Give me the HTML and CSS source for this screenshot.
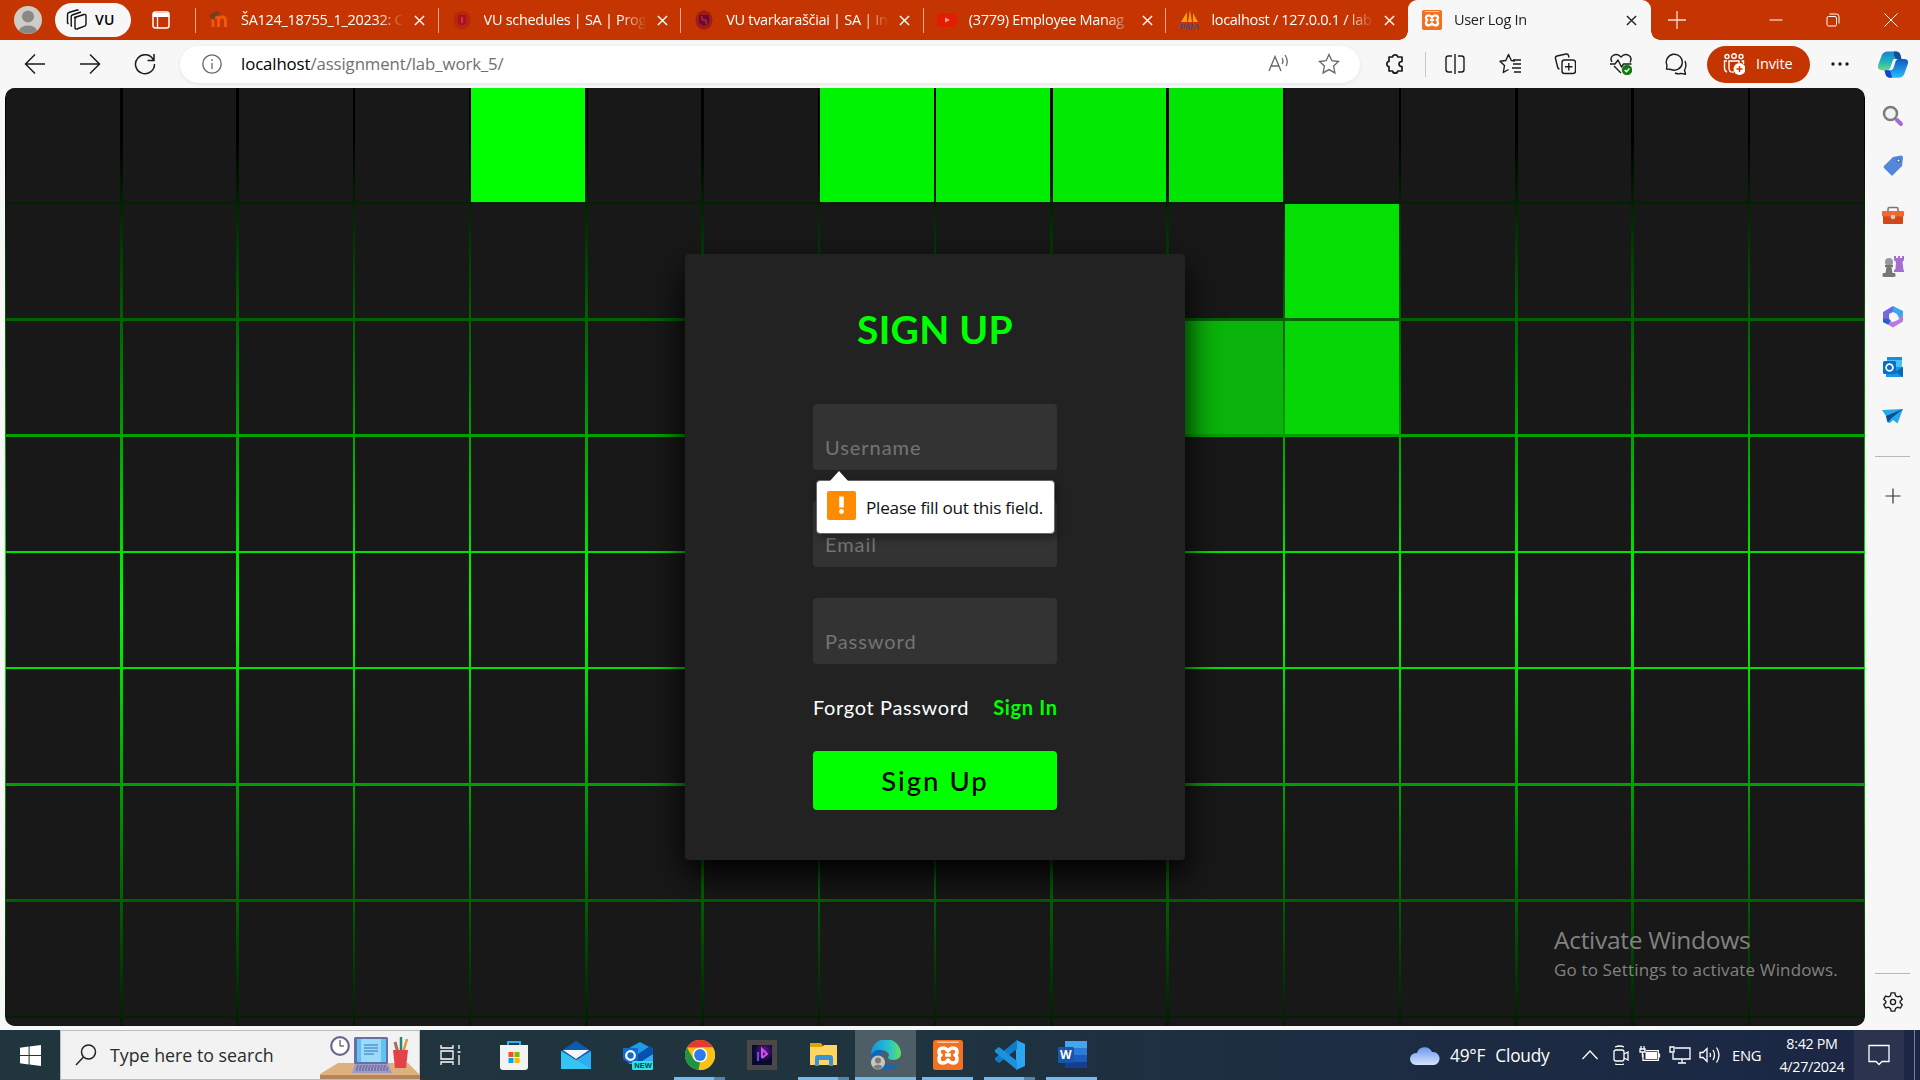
FILE: index.html
```html
<!DOCTYPE html>
<html lang="en">
<head>
<meta charset="utf-8">
<title>User Log In</title>
<link rel="stylesheet" href="styles.css">
</head>
<body>
<div class="screen">
  <header class="tabstrip">
    <svg class="avatar" viewBox="0 0 28 28"><circle cx="14" cy="14" r="14" fill="#cfccc8"/><circle cx="14" cy="10.5" r="6" fill="#8a8886"/><path d="M5 24.500a9.500 7.500 0 0 1 18 0a14 14 0 0 1-18 0z" fill="#8a8886"/></svg>
    <div class="workspace">
      <svg width="22" height="22" viewBox="0 0 22 22" fill="none" stroke="#111" stroke-width="1.400" stroke-linejoin="round"><path d="M8.500 8.500 18 5.500q2-.5 2 1.500v8q0 1.500-1.500 2.200L11 20q-2 .6-2-1.500V10q0-1 1-1.500z"/><path d="M6 17.500l-.8-.5V7.500q0-1 1-1.500L15 3"/><path d="M2.500 15l-1-1V5.500Q1.500 4 3 3.500L11 1q1-.3 1.500.5"/></svg>
      <span class="workspace-name">VU</span>
    </div>
    <svg class="tab-actions" width="18" height="18" viewBox="0 0 18 18" fill="none" stroke="#fff"><rect x="1" y="1" width="16" height="16" rx="2.500" stroke-width="1.500"/><path d="M1 4h16" stroke-width="4"/><path d="M5.500 5v12" stroke-width="1.300"/></svg>
    <nav class="tabs">
      <div class="tab"><svg class="fav" viewBox="0 0 20 20"><path d="M4 17V10q0-3 2.800-3T9.500 10v7M9.500 17v-7q0-3 3.500-3t3.500 3v7" fill="none" stroke="#ef5709" stroke-width="3"/><path d="M0 5 8 1l4 3-6 3v3L1 8z" fill="#7a3d20"/></svg><span class="tab-title">ŠA124_18755_1_20232: C</span><svg class="x" viewBox="0 0 12 12"><path d="M1 1l10 10M11 1 1 11"/></svg></div>
      <div class="tab"><svg class="fav" viewBox="0 0 20 20"><ellipse cx="10" cy="10" rx="8.500" ry="9.500" fill="#b62710"/><path d="M6 5h8v8l-4 3-4-3z" fill="#a80e24"/><path d="M9 7h2v6H9z" fill="#c93a30"/></svg><span class="tab-title">VU schedules | SA | Prog</span><svg class="x" viewBox="0 0 12 12"><path d="M1 1l10 10M11 1 1 11"/></svg></div>
      <div class="tab"><svg class="fav" viewBox="0 0 20 20"><ellipse cx="10" cy="10" rx="8.500" ry="9.500" fill="#9d1b1a"/><path d="M5 5h10v8l-5 3-5-3z" fill="#6e0636"/><path d="M8 6v4h4v4" fill="none" stroke="#b84a1c"/></svg><span class="tab-title">VU tvarkaraščiai | SA | Inc</span><svg class="x" viewBox="0 0 12 12"><path d="M1 1l10 10M11 1 1 11"/></svg></div>
      <div class="tab"><svg class="fav" viewBox="0 0 20 20"><rect y="3" width="20" height="14" rx="3.500" fill="#e31c04"/><path d="M8 7.500v5l5-2.500z" fill="#e9a08e"/></svg><span class="tab-title">(3779) Employee Manag</span><svg class="x" viewBox="0 0 12 12"><path d="M1 1l10 10M11 1 1 11"/></svg></div>
      <div class="tab"><svg class="fav" viewBox="0 0 20 20"><path d="M2 12 8 2v10zM9 12l2-12 2 12zM14 12V3l5 9z" fill="#f89c0e"/><text x="0" y="20" class="pma">PMA</text></svg><span class="tab-title">localhost / 127.0.0.1 / lab</span><svg class="x" viewBox="0 0 12 12"><path d="M1 1l10 10M11 1 1 11"/></svg></div>
      <div class="tab active"><svg class="fav" viewBox="0 0 30 30"><use href="#xampp"/></svg><span class="tab-title">User Log In</span><svg class="x" viewBox="0 0 12 12"><path d="M1 1l10 10M11 1 1 11"/></svg></div>
    </nav>
    <svg class="new-tab" viewBox="0 0 18 18"><path d="M9 0v18M0 9h18"/></svg>
    <div class="window-buttons">
      <svg viewBox="0 0 14 14"><path d="M0.500 7h13"/></svg>
      <svg viewBox="0 0 14 14"><rect x="1" y="3.500" width="9.500" height="9.500" rx="1.500"/><path d="M3.500 1h7q2.500 0 2.500 2.500v7"/></svg>
      <svg viewBox="0 0 14 14"><path d="M.5.5l13 13M13.500.5l-13 13"/></svg>
    </div>
  </header>

  <div class="toolbar">
    <div class="nav-buttons">
      <svg viewBox="0 0 22 22"><path d="M21 11H1.500M11 1.500 1.500 11l9.500 9.500"/></svg>
      <svg viewBox="0 0 22 22"><path d="M1 11h19.500M11 1.500l9.500 9.500-9.500 9.500"/></svg>
      <svg viewBox="0 0 22 22"><path d="M19.500 7A9.500 9.500 0 1 0 20.500 11M20 1v6.500h-6.500"/></svg>
    </div>
    <div class="address">
      <svg class="info" viewBox="0 0 20 20"><circle cx="10" cy="10" r="9.200"/><path d="M10 9v6M10 5v2"/></svg>
      <span class="url"><b>localhost</b>/assignment/lab_work_5/</span>
      <svg class="read" viewBox="0 0 22 22"><path d="M1 18 7 3.500 13 18M3 13h8M14 5q2 3 0 6M17 2q4 6 1 11"/></svg>
      <svg class="star" viewBox="0 0 22 22"><path d="M11 1.500l2.900 6.200 6.600.8-4.900 4.600 1.300 6.800-5.900-3.300-5.900 3.300 1.300-6.800L1.500 8.500l6.600-.8z"/></svg>
    </div>
    <div class="tools">
      <svg class="tool puzzle" viewBox="0 0 22 22"><path d="M5 4h3.500a2.700 2.700 0 0 1 5.300 0H18v4.500q-3 0-3 2.500t3 2.500V18h-4.200a2.700 2.700 0 0 1-5.300 0H5v-4.300a2.700 2.700 0 0 1 0-5.300z" stroke-width="1.700"/></svg>
      <i class="tool-divider"></i>
      <svg class="tool" viewBox="0 0 22 22"><path d="M8 3H4.500Q2 3 2 5.500v11Q2 19 4.500 19H8M14 3h3.500Q20 3 20 5.500v11q0 2.500-2.500 2.500H14M11 1v20"/></svg>
      <svg class="tool" viewBox="0 0 22 22"><path d="M16 8l-3.700-.5L9.500 1.500 6.800 7.500 1 8.300l4.500 4.200-1.200 7 5.200-3M14 11h8M13 15h9M15 19h7M14 7h8"/></svg>
      <svg class="tool" viewBox="0 0 22 22"><rect x="8" y="7" width="13.500" height="13.500" rx="2.500"/><path d="M11 13.800h7.500M14.800 10v7.500M5.500 16Q4 16 3.600 14L1.500 5.500Q1 3.500 3 3L12 1q2-.4 2.500 1.500l.5 2"/></svg>
      <svg class="tool" viewBox="0 0 22 22"><path d="M2 9Q-.5 5 3 2.500 7.500 0 11 4q3.500-4 8-1.500Q22.500 5 20 9.500M0 11h5l3-4 3.500 7 2-3h8M4 13l7 7"/><circle cx="17" cy="17" r="5.200" fill="#107c10" stroke="none"/><path d="M14.700 17l1.700 1.700 3-3.200" stroke="#fff"/></svg>
      <svg class="tool" viewBox="0 0 22 22"><path d="M1.500 16 2 12.500A8 8 0 1 1 6 16.500zM10 20q3 1.500 6 .4l4.500.8-1-4.200Q22 13 20 8"/></svg>
      <div class="invite"><svg viewBox="0 0 22 22"><circle cx="4" cy="3.500" r="2"/><circle cx="11" cy="3" r="2.300"/><circle cx="18" cy="3.500" r="2"/><path d="M4 8H1.500v7q0 3 2.500 4M11 19q-5 1-5-4V8h10v2M18.500 8h2v3"/><circle cx="16.500" cy="16" r="6" fill="#fff" stroke="none"/><path d="M13.500 16h6M16.500 13v6" stroke="#c43501"/></svg><span>Invite</span></div>
      <svg class="tool dots" viewBox="0 0 22 22"><circle cx="4" cy="11" r="1.700"/><circle cx="11" cy="11" r="1.700"/><circle cx="18" cy="11" r="1.700"/></svg>
      <svg class="copilot" viewBox="0 0 32 28"><defs><linearGradient id="cp1" x2="0" y2="1"><stop stop-color="#1683d8"/><stop offset=".6" stop-color="#24b7b7"/><stop offset="1" stop-color="#6bdc77"/></linearGradient><linearGradient id="cp2" x2="0" y2="1"><stop stop-color="#1455c0"/><stop offset="1" stop-color="#24bdfd"/></linearGradient></defs><path d="M10 0h9q4 0 5 4l1 4h-6q-3 0-4 4l-2 6q-1 2-4 2H4q-5 0-4-5l4-11q2-4 6-4z" fill="url(#cp1)"/><path d="M17 0h2q4 0 5 4l1 4h-6l-2-4z" fill="#15508f"/><path d="M22 8h6q5 0 4 5l-4 11q-2 4-6 4h-9q-4 0-5-4l-1-4h6q3 0 4-4l2-6q1-2 3-2z" fill="url(#cp2)"/><path d="M15 28h-2q-4 0-5-4l-1-4h6z" fill="#1643ca"/><path d="M17 8h3q-2 1-3 4l-2 6q-.6 2-2 2h-2q2-1 3-4l1.500-5q.5-2 1.500-3z" fill="#f7f7f7"/></svg>
    </div>
  </div>

  <div class="middle">
    <main class="page">
      <section class="tiles" id="tiles"></section>
      <form class="card" onsubmit="return false">
        <h2>SIGN UP</h2>
        <div class="field">Username</div>
        <div class="field">Email</div>
        <div class="field">Password</div>
        <div class="links"><a class="forgot">Forgot Password</a><a class="signin">Sign In</a></div>
        <button class="submit">Sign Up</button>
        <div class="bubble"><span class="bubble-icon"><svg width="29" height="29" viewBox="0 0 29 29"><path d="M12.200 5.500h4.600v11h-4.600z" fill="#fff"/><circle cx="14.500" cy="20.500" r="2.400" fill="#fff"/></svg></span><span class="bubble-text">Please fill out this field.</span></div>
      </form>
      <div class="watermark"><div class="wm-title">Activate Windows</div><div class="wm-sub">Go to Settings to activate Windows.</div></div>
    </main>
    <aside class="sidebar">
      <svg viewBox="0 0 24 24"><path d="M16 16l4 4" stroke="#a56ad6" stroke-width="4" stroke-linecap="round"/><circle cx="9.500" cy="9.500" r="6.500" fill="#eef3f8" stroke="#7c7c7c" stroke-width="2.500"/></svg>
      <svg viewBox="0 0 24 24"><path d="M12 3l8-1.500q2 0 2 2L21 12l-9 9q-1 1-2 0l-7-7q-1-1 0-2z" fill="#5287db"/><circle cx="17.500" cy="6.500" r="1.600" fill="#fff" stroke="#234b9e"/></svg>
      <svg viewBox="0 0 24 24"><path d="M7 8V5q0-1.500 1.500-1.500h7Q17 3.500 17 5v3" fill="none" stroke="#777" stroke-width="1.600"/><rect x="2" y="11" width="20" height="9" rx="1" fill="#d34615"/><rect x="1" y="7" width="22" height="5.500" rx="1" fill="#ef6a2c"/><circle cx="12" cy="13" r="2.300" fill="#ccc"/></svg>
      <svg viewBox="0 0 24 24"><path d="M13 1h2v2h2V1h2v2h2V1h2v4l-1.500 2 1 8H23v2H13v-2l1.500-1 .5-7-2-2z" fill="#a56dd3"/><circle cx="8" cy="7" r="4" fill="#999"/><path d="M4 10h8v2h-1.500l1 6H14q1.500 4-1 4H3q-2.500 0-1-4h2.500l1-6H4z" fill="#777"/></svg>
      <svg viewBox="0 0 24 24"><path d="M12 1l10 5v8l-4-1-2-4-4-2z" fill="#39a7ee"/><path d="M12 1 2 7v10l4 2 3-3-1-7 4-2V1z" fill="#7568df"/><path d="M6 19l6 3.500 10-6V9l-5 6-5 2-5-1z" fill="#b77ae4"/><path d="M2 14v3l5 2.500 3-4-4-2z" fill="#2563c4"/><circle cx="12" cy="12" r="3.800" fill="#f7f7f7"/></svg>
      <svg viewBox="0 0 24 24"><rect x="6" y="2" width="15" height="12" fill="#45c4f4"/><path d="M6 2h15v3H6z" fill="#2288d8"/><path d="M5 12h17v10H5z" fill="#1995e2"/><path d="M22 12v10l-8-5z" fill="#0966b4"/><rect x="2" y="6" width="13" height="13" rx="1.500" fill="#0470cd"/><circle cx="8.500" cy="12.500" r="3.400" fill="none" stroke="#fff" stroke-width="1.800"/></svg>
      <svg viewBox="0 0 24 24"><path d="M1 5l21-1-5.500 14.500L12 15l-3 3-3-1-1-6z" fill="#26a9e8"/><path d="M22 4 5 11l2 6.500 3-4z" fill="#0f4c94"/></svg>
      <i class="side-line"></i>
      <svg class="thin" viewBox="0 0 24 24"><path d="M12 4.500v15M4.500 12h15"/></svg>
      <i class="side-line low"></i>
      <svg class="gear" viewBox="0 0 24 24"><path d="M10 2h4l.8 3.200 2.200 1.200 3.100-.9 2 3.500-2.300 2.300v1.500l2.300 2.300-2 3.500-3.100-.9-2.200 1.300L14 22h-4l-.8-3.100L7 17.600l-3.100.9-2-3.500 2.300-2.200v-1.500L1.900 9l2-3.500 3.100.9 2.200-1.200z"/><circle cx="12" cy="12" r="2.800"/></svg>
    </aside>
  </div>

  <footer class="taskbar">
    <div class="start"><svg width="21" height="21" viewBox="0 0 21 21" fill="#fff"><path d="M0 2.800 8.600 1.600v8.300H0zM9.600 1.400 21 0v9.900H9.600zM0 10.900h8.600v8.500L0 18.200zM9.600 10.900H21V21L9.600 19.500z"/></svg></div>
    <div class="search">
      <svg class="lens" viewBox="0 0 22 22"><circle cx="13.500" cy="8" r="7"/><path d="M8.500 13 1 21"/></svg>
      <span>Type here to search</span>
      <svg class="desk" viewBox="0 0 100 48"><path d="M18 32h70l12 12v4H0v-5z" fill="#ddb07e"/><path d="M0 44h100v4H0z" fill="#b98455"/><circle cx="20" cy="15" r="8.800" fill="#fff" stroke="#69698e" stroke-width="2.200"/><path d="M20 9v6h4" fill="none" stroke="#333"/><rect x="34" y="6" width="34" height="27" rx="1.500" fill="#6870a4"/><rect x="37" y="8" width="29" height="23" fill="#60c3f4"/><path d="M41 8h20v23H41z" fill="#9adafa"/><path d="M44 14h14M44 17h14M44 20h14M44 23h10" stroke="#3573b6"/><path d="M35 33h33l4 9H32z" fill="#9b9bca"/><path d="M37 35h30M36 37h32M36 39h33" stroke="#555589" stroke-dasharray="2 1"/><path d="M78 22 75 11" stroke="#9d724c" stroke-width="3"/><path d="M83 22l4-14" stroke="#d99a3c" stroke-width="2.500"/><path d="M81 20V6" stroke="#29817b" stroke-width="2.500"/><path d="M73 19h15l-2 18H75z" fill="#e34248"/></svg>
    </div>
    <div class="task-view"><svg width="21" height="20" viewBox="0 0 21 20" fill="none" stroke="#fff" stroke-width="1.300"><path d="M1 0v3h12V0M1 20v-3h12v3M1 6h12v8H1zM19 0v4M19 10v10M17.500 7h3"/></svg></div>
    <div class="apps">
      <div class="app"><svg viewBox="0 0 30 30"><path d="M9 7V2h12v5" fill="none" stroke="#27b4f2" stroke-width="2"/><path d="M1 5h28v22q0 3-3 3H4q-3 0-3-3z" fill="#f2f2f2"/><path d="M9.500 12h5v5h-5z" fill="#f25022"/><path d="M15.500 12h5v5h-5z" fill="#7fba00"/><path d="M9.500 18h5v5h-5z" fill="#00a4ef"/><path d="M15.500 18h5v5h-5z" fill="#ffb900"/></svg></div>
      <div class="app"><svg viewBox="0 0 30 30"><path d="M0 11 15 1l15 10v6H0z" fill="#0a5db1"/><path d="M0 11l15 9 15-9v18H0z" fill="#2cadf0"/><path d="M0 11l30 18H0z" fill="#36c5f3"/><path d="M2 10h26L15 19z" fill="#f5f5f5"/></svg></div>
      <div class="app"><svg viewBox="0 0 30 30"><path d="M6 8 17 2l13 7-6 15H6z" fill="#1d9ce6"/><path d="M15 14 27 6l3 2v6L15 24z" fill="#0750ad"/><path d="M15 24l15-10v8H15z" fill="#37a8f2"/><path d="M0 8h15v15H6l-6-4z" fill="#0f6cce"/><circle cx="7.500" cy="15.500" r="4.300" fill="none" stroke="#fff" stroke-width="2.200"/><rect x="9" y="21" width="21" height="9" rx="1.500" fill="#2ce5eb"/><text x="11.300" y="28.400" class="new">NEW</text></svg></div>
      <div class="app run more"><svg viewBox="0 0 30 30"><circle cx="15" cy="15" r="15" fill="#fbc116"/><path d="M2 7.500A15 15 0 0 1 28 7.500H15z" fill="#e33b2e"/><path d="M2 7.500 8.500 19 15 22 13.500 30A15 15 0 0 1 2 7.500z" fill="#229342"/><path d="M28 7.500H15l6.500 11.500L14 30A15 15 0 0 0 28 7.500z" fill="#fbc116"/><circle cx="15" cy="15" r="7.300" fill="#fff"/><circle cx="15" cy="15" r="5.900" fill="#2e79ed"/></svg></div>
      <div class="app"><svg viewBox="0 0 30 30"><defs><radialGradient id="pg" cx=".6" cy=".3"><stop stop-color="#6a1590"/><stop offset="1" stop-color="#0a0a30"/></radialGradient></defs><path d="M0 0h30v30H0z" fill="#494747"/><path d="M5 5h20v20H5z" fill="url(#pg)"/><path d="M11 21V12" fill="none" stroke="#6a49e8" stroke-width="2.200"/><path d="M15 18V9l5 5-5 4" fill="none" stroke="#c955e8" stroke-width="2"/></svg></div>
      <div class="app run more"><svg viewBox="0 0 30 30"><path d="M1 3h11l2 3v3H1z" fill="#e1a100"/><path d="M1 7h12l2-2h13v20H1z" fill="#ffd661"/><path d="M6 26v-8q0-3 3-3h12q3 0 3 3v8h-4v-6H10v6z" fill="#3792d9"/></svg></div>
      <div class="app run edge"><svg viewBox="0 0 30 30"><defs><linearGradient id="eg"><stop stop-color="#1593dc"/><stop offset=".6" stop-color="#28c2cd"/><stop offset="1" stop-color="#66e05d"/></linearGradient></defs><path d="M0 15A15 15 0 0 1 30 13q0 7-8 7-5 0-5-3 2-2 0-4-3-4-9-2Q0 15 0 15z" fill="url(#eg)"/><path d="M0 15q5-8 13-4-5 4-2 10 4 6 17 3-5 6-13 6A15 15 0 0 1 0 15z" fill="#1267b4"/><circle cx="7" cy="22.500" r="7" fill="#c9c6c2"/><circle cx="7" cy="20.500" r="3" fill="#7f7b78"/><path d="M2 27q5-5 10 0-5 4-10 0z" fill="#7f7b78"/></svg></div>
      <div class="app run"><svg viewBox="0 0 30 30"><g id="xampp"><rect width="30" height="30" rx="2.500" fill="#f37021"/><path d="M4 1.500h22v1.500H4z" fill="#ffc8a4"/><path d="M10 8q-4 0-4 4 0 2 2 3-2 1-2 4 0 4 4 4 3 0 5-3 2 3 5 3 4 0 4-4 0-3-2-4 2-1 2-3 0-4-4-4-3 0-5 3-2-3-5-3zM12 15h6" fill="none" stroke="#fff" stroke-width="3.600" stroke-linejoin="round"/></g></svg></div>
      <div class="app run more"><svg viewBox="0 0 30 30"><path d="M21 0l9 4v22l-9 4z" fill="#2ba7f2"/><path d="M22 0v9L4 23l-4-3v-2z" fill="#0e7dc9"/><path d="M22 30v-9L4 7 0 10v2z" fill="#1e91de"/></svg></div>
      <div class="app run"><svg viewBox="0 0 30 30"><path d="M8 1h22v7H8z" fill="#43a5ee"/><path d="M8 8h22v7H8z" fill="#2c7cd6"/><path d="M8 15h22v7H8z" fill="#1b5dbe"/><path d="M8 22h22v6H8z" fill="#123f92"/><rect x="1" y="7" width="16" height="16" rx="1.500" fill="#1855b3"/><text x="3" y="19" class="word">W</text></svg></div>
    </div>
    <div class="tray">
      <svg class="cloud" viewBox="0 0 30 20"><defs><linearGradient id="cl" x2="0" y2="1"><stop stop-color="#6c96ee"/><stop offset="1" stop-color="#d6e4fd"/></linearGradient></defs><path d="M6 20a6 6 0 0 1 0-12h1A8 8 0 0 1 22 7a6.500 6.500 0 0 1 2 13z" fill="url(#cl)"/></svg>
      <span class="weather"><span class="temp">49°F</span><span class="sky">Cloudy</span></span>
      <svg class="ti" viewBox="0 0 22 20"><path d="M3.500 14 11 6l7.500 8"/></svg>
      <svg class="ti" viewBox="0 0 22 20"><rect x="5" y="5" width="10" height="11" rx="2"/><path d="M15 9l4-2v8l-4-2M6 2q5-2 9 0M6 19q5 1.500 9 0"/></svg>
      <svg class="ti" viewBox="0 0 22 20"><path d="M6.500 7H18v7H6.500z" fill="#fff" stroke="none"/><path d="M4 9v6.300h15.300V5.700H7M20.500 8.500v4M2 1v3M5 1v3M1 4h5v3H1zM3.500 7v5"/></svg>
      <svg class="ti" viewBox="0 0 22 20"><path d="M6 3h15v11H4V8M13 14v4M9 18h8M1 2h4v5H1z"/></svg>
      <svg class="ti" viewBox="0 0 22 20"><path d="M1 7.500h3l4-4v13l-4-4H1zM11 8q1 2 0 4M14 5q3 5 0 10M17.500 2.500q5 7.500 0 15"/></svg>
      <span class="lang">ENG</span>
      <div class="clock"><span>8:42 PM</span><span class="date">4/27/2024</span></div>
      <div class="notify"><svg width="22" height="22" viewBox="0 0 22 22" fill="none" stroke="#fff" stroke-width="1.300"><path d="M1 1.500h20v16h-7l-3 3-3-3H1z"/></svg></div>
    </div>
  </footer>
</div>
<script src="script.js"></script>
</body>
</html>
```
FILE: styles.css
```css
* { box-sizing: border-box; }
body { margin: 0; background: #f7f7f7; font-family: "Open Sans", "Noto Sans", sans-serif; overflow: hidden; }
svg { display: block; flex: none; }
.screen { width: 1920px; height: 1080px; display: flex; flex-direction: column; overflow: hidden; }

/* Tab strip */
.tabstrip { height: 40px; background: #c43501; display: flex; align-items: center; padding-left: 14px; flex: none; }
.avatar { width: 28px; height: 28px; }
.workspace { margin-left: 13px; width: 76px; height: 34px; border-radius: 17px; background: #f7f7f7; display: flex; align-items: center; padding-left: 11px; }
.workspace-name { margin-left: 7px; font-size: 14px; font-weight: 600; letter-spacing: .3px; line-height: 32px; padding-bottom: 1px; }
.tab-actions { margin-left: 21px; }
.tabs { display: flex; margin-left: 25px; height: 40px; }
.tab { width: 242.600px; height: 40px; display: flex; align-items: center; padding-left: 14px; color: #fff; position: relative; }
.tab:not(.active)::before { content: ""; position: absolute; left: 0; top: 8px; width: 1px; height: 25px; background: #eaa78e; }
.fav { width: 20px; height: 20px; }
.pma { font: italic bold 9px "Liberation Sans", sans-serif; fill: #4a4a84; }
.tab-title { width: 163px; margin-left: 12px; font-size: 14.500px; letter-spacing: -0.300px; white-space: nowrap; overflow: hidden; line-height: 38px; -webkit-mask-image: linear-gradient(90deg, #000 136px, transparent 163px); mask-image: linear-gradient(90deg, #000 136px, transparent 163px); }
.x { width: 11px; height: 11px; margin-left: 10px; fill: none; stroke: currentColor; stroke-width: 1.500; }
.active { background: #f7f7f7; color: #222; border-radius: 9px 9px 0 0; }
.active .x { margin-left: 9px; }
.active::before, .active::after { content: ""; position: absolute; bottom: 0; width: 9px; height: 9px; }
.active::before { left: -9px; background: radial-gradient(circle at 0 0, #c43501 8.500px, #f7f7f7 9px); }
.active::after { right: -9px; background: radial-gradient(circle at 100% 0, #c43501 8.500px, #f7f7f7 9px); }
.new-tab { width: 18px; height: 18px; margin-left: 17px; stroke: #f8dcd1; stroke-width: 1.300; }
.window-buttons { display: flex; margin-left: 83px; gap: 43.500px; fill: none; stroke: #fff; }
.window-buttons svg { width: 14px; height: 14px; }

/* Toolbar */
.toolbar { height: 48px; flex: none; display: flex; align-items: center; padding-left: 24px; background: #f7f7f7; }
.nav-buttons { display: flex; gap: 33px; fill: none; stroke: #1c1c1c; stroke-width: 1.500; }
.nav-buttons svg { width: 22px; height: 22px; }
.address { width: 1180px; height: 37px; margin-left: 24px; border-radius: 19px; background: #fff; box-shadow: 0 1px 4px rgba(0,0,0,.08); display: flex; align-items: center; padding-left: 22px; fill: none; stroke: #666; stroke-width: 1.300; flex: none; }
.info { width: 20px; height: 20px; }
.url { margin-left: 19px; width: 1038px; flex: none; font-size: 16.800px; letter-spacing: -0.100px; color: #707070; line-height: 34px; }
.url b { font-weight: 400; color: #000; }
.read { width: 22px; height: 22px; margin-left: -11px; }
.star { width: 22px; height: 22px; margin-left: 28px; }
.tools { display: flex; align-items: center; margin-left: 24px; }
.tool { width: 22px; height: 22px; margin-right: 33.200px; fill: none; stroke: #1c1c1c; stroke-width: 1.400; stroke-linejoin: round; }
.puzzle { margin-right: 19px; }
.tool-divider { width: 1px; height: 25px; background: #c8c8c8; margin-right: 18px; }
.invite { width: 103px; height: 37px; margin-left: -13px; margin-right: 19px; border-radius: 19px; background: #c43501; color: #fff; display: flex; align-items: center; padding-left: 16px; font-size: 14.500px; letter-spacing: -.1px; }
.invite svg { width: 22px; height: 22px; fill: none; stroke: #fff; stroke-width: 1.400; margin-right: 11px; }
.invite span { padding-bottom: 1px; }
.dots { fill: #1c1c1c; stroke: none; margin-right: 27px; }
.copilot { width: 30px; height: 27px; }

/* Web page area */
.middle { height: 942px; flex: none; display: flex; padding-left: 5px; }
.page { width: 1860px; height: 938px; border-radius: 10px; overflow: hidden; display: grid; place-items: center; position: relative; background: linear-gradient(#000 52px, #0f0 521px, #000 990px); }
.tiles { grid-area: 1 / 1; width: 1860px; height: 938px; display: flex; flex-wrap: wrap; gap: 2.500px; justify-content: center; align-content: flex-start; overflow: hidden; }
.tile { width: 113.750px; height: 113.750px; background: #181818; }
.card { grid-area: 1 / 1; width: 500px; height: 606px; position: relative; background: #222; border-radius: 4px; box-shadow: 0 15px 35px #000; padding: 40px 128px; display: flex; flex-direction: column; font-family: Lato, "Open Sans", sans-serif; }
.card h2 { margin: 0; height: 70px; line-height: 70px; text-align: center; white-space: nowrap; color: #0f0; font-size: 39px; font-weight: 700; letter-spacing: .3px; }
.field { height: 65.500px; flex: none; margin-bottom: 31.500px; background: #333; border-radius: 4px; color: #747474; font-size: 20px; letter-spacing: .95px; line-height: 24px; padding: 31px 12px 0; }
.card h2 + .field { margin-top: 40px; }
.links { display: flex; justify-content: space-between; height: 25px; line-height: 25px; color: #fff; font-size: 20px; letter-spacing: .65px; white-space: nowrap; }
.signin { color: #0f0; font-weight: 700; margin-right: -.6px; }
.submit { margin: 31px 0 0; padding: 0; height: 59px; border: 0; border-radius: 4px; background: #0f0; color: #000; font: 500 27.500px/55px Lato, "Open Sans", sans-serif; letter-spacing: 2px; }
.bubble { position: absolute; left: 131px; top: 226px; width: 239px; height: 54px; background: #fff; border: 1px solid #666; border-radius: 4px; box-shadow: 2px 4px 8px rgba(0,0,0,.4); display: flex; align-items: center; padding-left: 10px; font-family: "Open Sans", sans-serif; }
.bubble::before { content: ""; position: absolute; left: 12px; top: -10px; width: 20px; height: 11px; background: #fff; clip-path: polygon(50% 0, 100% 100%, 0 100%); }
.bubble-icon { width: 29px; height: 29px; background: #ff8c00; border-radius: 2px; margin-top: -3px; }
.bubble-text { margin-left: 10px; font-size: 17.200px; letter-spacing: -.25px; color: #111; white-space: nowrap; }
.watermark { position: absolute; left: 1549px; top: 836px; color: #828282; white-space: nowrap; }
.wm-title { font-size: 24.500px; line-height: 32px; letter-spacing: -.3px; }
.wm-sub { font-size: 17px; line-height: 27px; letter-spacing: .15px; }

/* Edge sidebar */
.sidebar { width: 55px; display: flex; flex-direction: column; align-items: center; padding-top: 16px; }
.sidebar svg { width: 24px; height: 24px; margin-bottom: 26.200px; }
.side-line { width: 35px; height: 1px; background: #b8b8b8; margin-top: 1px; margin-bottom: 27px; flex: none; }
.sidebar .thin { stroke: #333; stroke-width: 1.200; margin-bottom: 465px; }
.low { margin: 0 0 16px; }
.sidebar .gear { width: 22px; fill: none; stroke: #1c1c1c; stroke-width: 1.500; margin: 0; }

/* Taskbar */
.taskbar { height: 50px; flex: none; display: flex; background: linear-gradient(90deg, #21353f, #20343f 45%, #1c2b42 75%, #1b2745); color: #fff; }
.start { width: 60px; display: grid; place-items: center; }
.search { width: 360px; background: #f2f2f2; border: 1px solid #bcbcbc; display: flex; align-items: center; padding-left: 14px; color: #2b2b2b; font-size: 17.800px; letter-spacing: 0; white-space: nowrap; }
.search span { margin-left: 13px; width: 210px; flex: none; }
.lens { width: 22px; height: 22px; fill: none; stroke: #222; stroke-width: 1.500; }
.desk { width: 100px; height: 48px; }
.task-view { width: 61px; display: grid; place-items: center; }
.apps { display: flex; gap: 1px; margin-left: 2px; }
.app { width: 61px; height: 50px; display: grid; place-items: center; position: relative; }
.app > svg { width: 30px; height: 30px; }
.run::after { content: ""; position: absolute; bottom: 0; left: 5px; width: 51px; height: 3px; background: #76b9ed; }
.more::after { background: linear-gradient(90deg, #76b9ed 40px, #5684a8 40px); }
.edge { background: #4d5e67; }
.edge::after { left: 0; width: 61px; }
.new { font: bold 7.500px "Liberation Sans", sans-serif; fill: #053d48; }
.word { font: bold 12px "Open Sans", sans-serif; fill: #fff; }
.tray { display: flex; align-items: center; margin-left: auto; width: 510px; }
.cloud { width: 30px; height: 20px; }
.weather { display: flex; gap: 10px; margin-left: 10px; width: 130px; font-size: 17.300px; letter-spacing: -.2px; }
.ti { width: 22px; height: 20px; margin-right: 8px; fill: none; stroke: #fff; stroke-width: 1.300; }
.weather + .ti { margin-left: -1px; }
.lang { margin-left: 3px; width: 32px; font-size: 14.800px; letter-spacing: -.3px; }
.clock { margin-left: 13px; width: 70px; display: flex; flex-direction: column; align-items: center; font-size: 14.300px; line-height: 23px; letter-spacing: -.3px; }
.notify { width: 50px; height: 50px; margin-left: 7px; background: #2b334f; display: grid; place-items: center; position: relative; }
.notify::after { content: ""; position: absolute; left: 60px; top: 0; width: 1px; height: 50px; background: #76809a; }
```
FILE: script.js
```js
// Tiles still fading out after the pointer passed, keyed by index in a 16-column grid
const lit = { 4: "#00ff00", 7: "#00f300", 8: "#00ee00", 9: "#02ea02", 10: "#02e502", 27: "#04df04", 42: "#0ab40a", 43: "#06d506" };
const tiles = document.getElementById("tiles");
for (let i = 0; i < 16 * 9; i++) {
  const tile = document.createElement("span");
  tile.className = "tile";
  if (lit[i]) tile.style.background = lit[i];
  tiles.appendChild(tile);
}
```
